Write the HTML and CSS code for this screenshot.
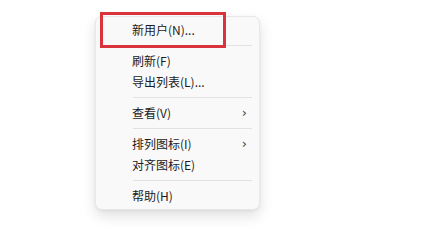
FILE: index.html
```html
<!DOCTYPE html>
<html lang="zh-CN">
<head>
<meta charset="utf-8">
<link rel="stylesheet" href="styles.css">
</head>
<body>
<div class="stage">
  <div class="menu">
    <div class="item">新用户(N)...</div>
    <div class="sep"></div>
    <div class="item">刷新(F)</div>
    <div class="item">导出列表(L)...</div>
    <div class="sep"></div>
    <div class="item">查看(V)<span class="chev">›</span></div>
    <div class="sep"></div>
    <div class="item">排列图标(I)<span class="chev">›</span></div>
    <div class="item">对齐图标(E)</div>
    <div class="sep"></div>
    <div class="item">帮助(H)</div>
    <div class="highlight"></div>
  </div>
</div>
</body>
</html>
```
FILE: styles.css
```css
html, body {
  margin: 0;
  padding: 0;
  background: #ffffff;
}
.stage {
  width: 427px;
  height: 245px;
  padding: 16px 0 0 95px;
  box-sizing: border-box;
  display: flex;
  align-items: flex-start;
}
.menu {
  position: relative;
  width: 165px;
  box-sizing: border-box;
  padding: 2px 0 3px 0;
  background: #f9f9f9;
  border: 1px solid #e8e8e8;
  border-radius: 7px;
  box-shadow: 0 6px 14px rgba(0,0,0,0.12), 0 1px 3px rgba(0,0,0,0.06);
  display: flex;
  flex-direction: column;
  font-family: "Noto Sans CJK SC", "Noto Sans", sans-serif;
  font-size: 12px;
  color: #1b1b1b;
}
.item {
  height: 21px;
  line-height: 21px;
  padding-left: 36px;
  padding-right: 12px;
  display: flex;
  justify-content: space-between;
  align-items: center;
  white-space: nowrap;
}
.chev {
  font-family: "DejaVu Sans", sans-serif;
  font-size: 13px;
  color: #444;
  line-height: 21px;
}
.sep {
  height: 1px;
  background: #e2e2e2;
  margin: 5px 7px 4px 37px;
}
.highlight {
  position: absolute;
  left: 4px;
  top: -5px;
  width: 126px;
  height: 36px;
  box-sizing: border-box;
  border: 3px solid #d9343b;
}
```
